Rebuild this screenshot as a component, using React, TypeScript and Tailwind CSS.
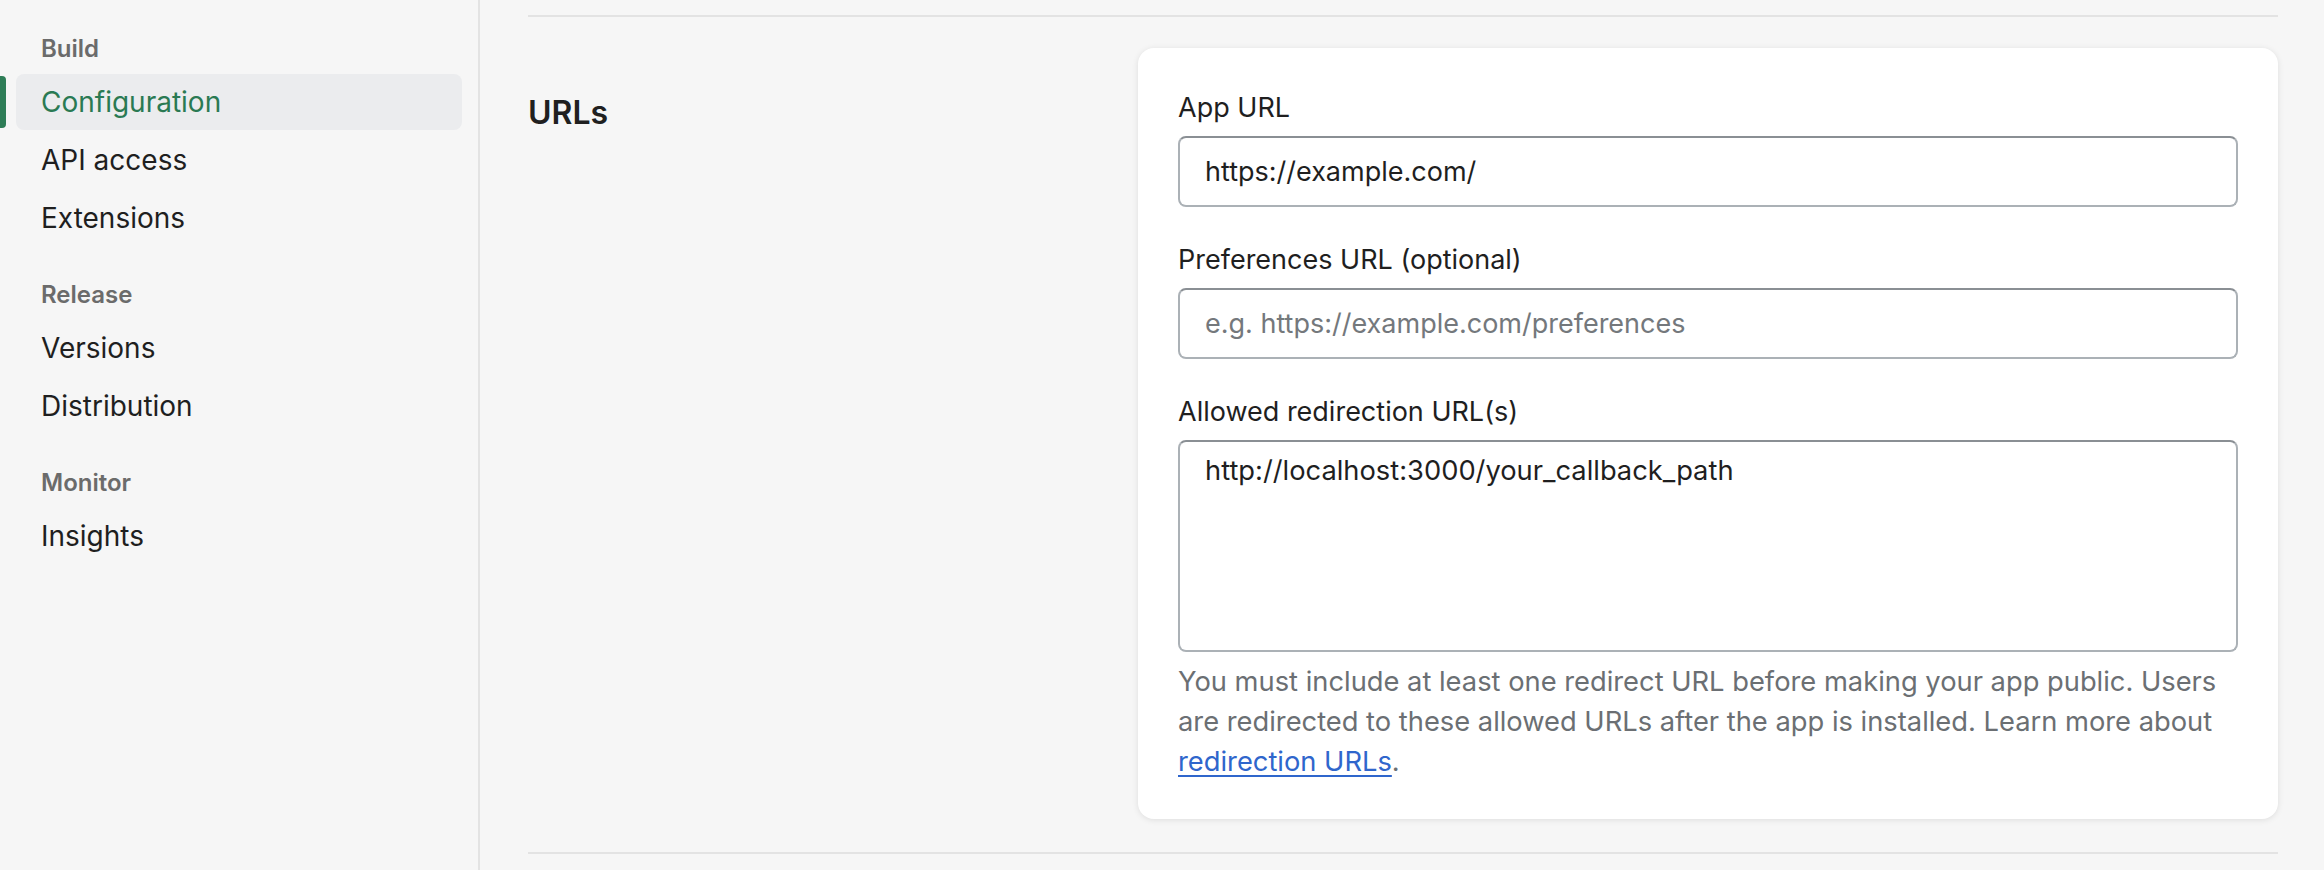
import React from "react";

const font = { fontFamily: "Inter, 'Noto Sans', sans-serif" };

function NavLabel({ children, first }: { children: React.ReactNode; first?: boolean }) {
  return (
    <div
      className={`h-[32px] leading-[32px] text-[24px] font-semibold text-[#6b6b6b] pl-[41px] mb-[9px] ${first ? "" : "mt-[33px]"}`}
    >
      {children}
    </div>
  );
}

function NavItem({ children, active }: { children: React.ReactNode; active?: boolean }) {
  return (
    <div className="relative h-[56px] flex items-center">
      {active && (
        <div className="absolute left-0 top-[2px] bottom-[2px] w-[6px] rounded-r-[4px] bg-[#2e7d57]" />
      )}
      <div
        className={`ml-[16px] mr-[16px] flex-1 h-full flex items-center rounded-[8px] pl-[25px] text-[28px] ${
          active ? "bg-[#ebecee] text-[#2a7a53]" : "text-[#1f1f1f]"
        }`}
      >
        {children}
      </div>
    </div>
  );
}

function Label({ children }: { children: React.ReactNode }) {
  return <div className="h-[40px] leading-[40px] text-[27px] text-[#1f1f1f] mb-[8px]">{children}</div>;
}

export default function App() {
  return (
    <div style={font} className="w-[2324px] h-[870px] flex bg-[#f6f6f6] overflow-hidden">
      <aside className="w-[478px] shrink-0 pt-[33px] flex flex-col">
        <NavLabel first>Build</NavLabel>
        <div className="flex flex-col gap-[2px]">
          <NavItem active>Configuration</NavItem>
          <NavItem>API access</NavItem>
          <NavItem>Extensions</NavItem>
        </div>
        <NavLabel>Release</NavLabel>
        <div className="flex flex-col gap-[2px]">
          <NavItem>Versions</NavItem>
          <NavItem>Distribution</NavItem>
        </div>
        <NavLabel>Monitor</NavLabel>
        <div className="flex flex-col gap-[2px]">
          <NavItem>Insights</NavItem>
        </div>
      </aside>
      <div className="w-[2px] shrink-0 bg-[#e3e3e3]" />
      <main className="flex-1 pl-[48px] pr-[46px] pt-[15px]">
        <div className="h-[2px] bg-[#e3e3e3]" />
        <section className="flex pt-[31px] pb-[33px]">
          <div className="w-[610px] shrink-0 pt-[41px]">
            <h2 className="text-[32px] leading-[48px] font-semibold text-[#202020]">URLs</h2>
          </div>
          <div className="flex-1 bg-white rounded-[16px] shadow-[0_1px_6px_rgba(0,0,0,0.10)] px-[40px] pt-[40px] pb-[37px]">
            <Label>App URL</Label>
            <input
              readOnly
              value="https://example.com/"
              className="block w-full h-[71px] rounded-[8px] border-2 border-[#abb1b6] border-t-[#8a8f94] bg-white pl-[25px] text-[27px] text-[#1f1f1f] outline-none"
            />
            <div className="h-[33px]" />
            <Label>Preferences URL (optional)</Label>
            <input
              readOnly
              placeholder="e.g. https://example.com/preferences"
              className="block w-full h-[71px] rounded-[8px] border-2 border-[#abb1b6] border-t-[#8a8f94] bg-white pl-[25px] text-[27px] text-[#1f1f1f] placeholder:text-[#74787c] outline-none"
            />
            <div className="h-[33px]" />
            <Label>Allowed redirection URL(s)</Label>
            <textarea
              readOnly
              value="http://localhost:3000/your_callback_path"
              className="block w-full h-[212px] resize-none rounded-[8px] border-2 border-[#abb1b6] border-t-[#8a8f94] bg-white pl-[25px] pt-[9px] text-[27.3px] leading-[40px] text-[#1f1f1f] outline-none"
            />
            <p className="mt-[10px] text-[27.3px] leading-[40px] text-[#6b6f73]">
              You must include at least one redirect URL before making your app public. Users
              <br />
              are redirected to these allowed URLs after the app is installed. Learn more about
              <br />
              <a className="text-[#2f66cc] underline underline-offset-[4px] decoration-[2px]">redirection URLs</a>.
            </p>
          </div>
        </section>
        <div className="h-[2px] bg-[#e3e3e3]" />
      </main>
    </div>
  );
}
